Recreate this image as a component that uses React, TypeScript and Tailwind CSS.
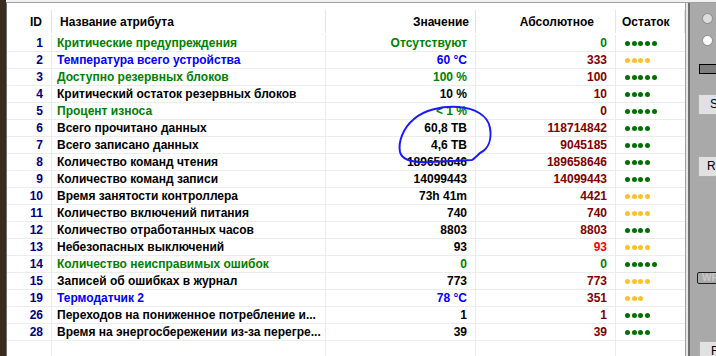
import React from 'react';

type Row = {
  id: number;
  name: string;
  nc: string;
  val: string;
  vc: string;
  abs: string;
  ac: string;
  dots: number;
  dc: string;
};

const G = 'text-[#008000]';
const B = 'text-[#0000ff]';
const K = 'text-black';
const M = 'text-[#800000]';
const R = 'text-[#ff0000]';
const DG = 'bg-[#007000]';
const DY = 'bg-[#ffc02e]';

const rows: Row[] = [
  { id: 1, name: 'Критические предупреждения', nc: G, val: 'Отсутствуют', vc: G, abs: '0', ac: G, dots: 5, dc: DG },
  { id: 2, name: 'Температура всего устройства', nc: B, val: '60 °C', vc: B, abs: '333', ac: M, dots: 4, dc: DY },
  { id: 3, name: 'Доступно резервных блоков', nc: G, val: '100 %', vc: G, abs: '100', ac: M, dots: 5, dc: DG },
  { id: 4, name: 'Критический остаток резервных блоков', nc: K, val: '10 %', vc: K, abs: '10', ac: M, dots: 4, dc: DG },
  { id: 5, name: 'Процент износа', nc: G, val: '< 1 %', vc: G, abs: '0', ac: M, dots: 5, dc: DG },
  { id: 6, name: 'Всего прочитано данных', nc: K, val: '60,8 TB', vc: K, abs: '118714842', ac: M, dots: 4, dc: DG },
  { id: 7, name: 'Всего записано данных', nc: K, val: '4,6 TB', vc: K, abs: '9045185', ac: M, dots: 4, dc: DG },
  { id: 8, name: 'Количество команд чтения', nc: K, val: '189658646', vc: K, abs: '189658646', ac: M, dots: 4, dc: DG },
  { id: 9, name: 'Количество команд записи', nc: K, val: '14099443', vc: K, abs: '14099443', ac: M, dots: 4, dc: DG },
  { id: 10, name: 'Время занятости контроллера', nc: K, val: '73h 41m', vc: K, abs: '4421', ac: M, dots: 4, dc: DY },
  { id: 11, name: 'Количество включений питания', nc: K, val: '740', vc: K, abs: '740', ac: M, dots: 4, dc: DY },
  { id: 12, name: 'Количество отработанных часов', nc: K, val: '8803', vc: K, abs: '8803', ac: M, dots: 4, dc: DG },
  { id: 13, name: 'Небезопасных выключений', nc: K, val: '93', vc: K, abs: '93', ac: R, dots: 4, dc: DY },
  { id: 14, name: 'Количество неисправимых ошибок', nc: G, val: '0', vc: G, abs: '0', ac: G, dots: 5, dc: DG },
  { id: 15, name: 'Записей об ошибках в журнал', nc: K, val: '773', vc: K, abs: '773', ac: M, dots: 4, dc: DY },
  { id: 19, name: 'Термодатчик 2', nc: B, val: '78 °C', vc: B, abs: '351', ac: M, dots: 3, dc: DY },
  { id: 26, name: 'Переходов на пониженное потребление и...', nc: K, val: '1', vc: K, abs: '1', ac: M, dots: 4, dc: DG },
  { id: 28, name: 'Время на энергосбережении из-за перегре...', nc: K, val: '39', vc: K, abs: '39', ac: M, dots: 4, dc: DG },
];

function Dots({ n, color }: { n: number; color: string }) {
  return (
    <div className="flex items-center gap-[1.7px]">
      {Array.from({ length: n }).map((_, i) => (
        <span key={i} className={`w-[5px] h-[5px] rounded-full ${color}`} />
      ))}
    </div>
  );
}

function HeadCell({ children, className }: { children?: React.ReactNode; className: string }) {
  return (
    <div className="h-[32px] pt-[7px]">
      <div className={`h-[23px] border-r border-[#e5e5e5] flex items-center ${className}`}>{children}</div>
    </div>
  );
}

export default function App() {
  const cell = 'h-[17px] border-b border-r border-[#ececec] leading-[16px] flex items-center whitespace-nowrap overflow-hidden';
  return (
    <div className="relative w-[716px] h-[356px] flex overflow-hidden bg-[#f0f0f0] font-['Liberation_Sans',Arial,sans-serif] font-bold text-[12px]">
      <div className="w-[6px] shrink-0 bg-[#3b2b1f]" />
      <div className="flex-1 flex flex-col pt-[2px]">
        <div className="flex flex-1 min-h-0 border-t border-[#a0a0a0]">
          <div className="w-[680px] shrink-0 bg-white border-l border-l-[#6d6d6d] border-r border-r-[#a0a0a0] overflow-hidden">
            <div className="grid grid-cols-[45px_274px_150px_140px_69px]">
              <HeadCell className="justify-end pr-[9px]">ID</HeadCell>
              <HeadCell className="pl-[8px]">Название атрибута</HeadCell>
              <HeadCell className="justify-end pr-[6px]">Значение</HeadCell>
              <HeadCell className="justify-end pr-[21px]">Абсолютное</HeadCell>
              <HeadCell className="pl-[6px]">Остаток</HeadCell>

              {rows.map((r) => (
                <React.Fragment key={r.id}>
                  <div className={`${cell} justify-end pr-[8px] text-[#000080]`}>{r.id}</div>
                  <div className={`${cell} pl-[5px] ${r.nc}`}>{r.name}</div>
                  <div className={`${cell} justify-end pr-[8px] ${r.vc}`}>{r.val}</div>
                  <div className={`${cell} justify-end pr-[8px] ${r.ac}`}>{r.abs}</div>
                  <div className="h-[17px] border-b border-[#ececec] flex items-center pl-[9px]">
                    <Dots n={r.dots} color={r.dc} />
                  </div>
                </React.Fragment>
              ))}

              <div className="h-[20px] border-r border-[#ececec]" />
              <div className="h-[20px] border-r border-[#ececec]" />
              <div className="h-[20px] border-r border-[#ececec]" />
              <div className="h-[20px] border-r border-[#ececec]" />
              <div className="h-[20px]" />
            </div>
          </div>
          <div className="w-[2px] shrink-0 bg-[#e6e6e6]" />
          <div className="flex-1 flex flex-col overflow-hidden bg-[#a9a9a9] border-l-2 border-[#6e6e6e] font-normal">
            <div className="mt-[10px] ml-[12px] w-[11px] h-[11px] shrink-0 rounded-full bg-[#dcdcdc] border border-[#8a8a8a]" />
            <div className="mt-[11px] ml-[12px] w-[11px] h-[11px] shrink-0 rounded-full bg-white border border-[#8a8a8a]" />
            <div className="mt-[18px] ml-[9px] w-[40px] h-[10px] shrink-0 bg-[#7d7d7d] border border-black" />
            <div className="mt-[20px] ml-[8px] w-[40px] h-[21px] shrink-0 bg-[#e1e1e1] border border-[#adadad] pl-[11px] leading-[19px] text-black">
              S
            </div>
            <div className="mt-[41px] ml-[8px] w-[40px] h-[21px] shrink-0 bg-[#e1e1e1] border border-[#adadad] pl-[8px] leading-[19px] text-black">
              R
            </div>
            <div className="mt-[95px] ml-[7px] w-[40px] h-[12px] shrink-0 rounded-[2px] border border-[#1e1e1e] pl-[4px] leading-[10px] text-[10px] font-bold text-[#c8c8c8]">
              WR
            </div>
            <div className="mt-[57px] ml-[9px] w-[40px] h-[21px] shrink-0 bg-[#e1e1e1] border border-[#adadad] pl-[11px] leading-[19px] text-black">
              F
            </div>
          </div>
        </div>
      </div>
      <svg className="absolute inset-0 pointer-events-none" width="716" height="356" viewBox="0 0 716 356">
        <path
          d="M414 119 C424 110 442 106 458 107 C474 108 488 115 490 128 C492 140 488 149 480 153 C477 156 475 158 472 160 L430 162 C412 163 402 160 400 152 C398 142 403 128 414 119"
          fill="none"
          stroke="#1a1aff"
          strokeWidth="2"
          strokeLinecap="round"
          strokeLinejoin="round"
        />
      </svg>
    </div>
  );
}
